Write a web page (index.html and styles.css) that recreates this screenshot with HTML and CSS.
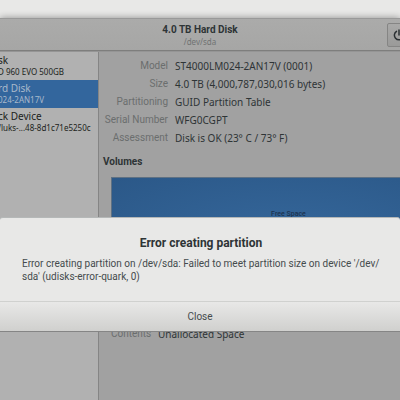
FILE: index.html
```html
<!DOCTYPE html>
<html lang="en">
<head>
<meta charset="utf-8">
<title>Disks</title>
<link rel="stylesheet" href="styles.css">
</head>
<body>
<div class="window">
  <header class="titlebar">
    <div class="titles">
      <h1>4.0 TB Hard Disk</h1>
      <p>/dev/sda</p>
    </div>
    <button class="power" type="button" aria-label="Power off">
      <svg width="12" height="12" viewBox="0 0 12 12" fill="none" stroke="#2b3033" stroke-width="1.5" stroke-linecap="round"><path d="M3.5 2.3A4.6 4.6 0 1 0 8.5 2.3M6 1v5"/></svg>
    </button>
  </header>
  <div class="panes">
    <nav class="sidebar">
      <a class="device" href="#"><span class="name">sk</span><span class="detail">D 960 EVO 500GB</span></a>
      <a class="device selected" href="#"><span class="name">rd Disk</span><span class="detail">024-2AN17V</span></a>
      <a class="device" href="#"><span class="name">ck Device</span><span class="detail">/luks-...48-8d1c71e5250c</span></a>
    </nav>
    <main class="content">
      <dl class="facts">
        <dt>Model</dt><dd>ST4000LM024-2AN17V (0001)</dd>
        <dt>Size</dt><dd>4.0 TB (4,000,787,030,016 bytes)</dd>
        <dt>Partitioning</dt><dd>GUID Partition Table</dd>
        <dt>Serial Number</dt><dd>WFG0CGPT</dd>
        <dt>Assessment</dt><dd>Disk is OK (23° C / 73° F)</dd>
      </dl>
      <h2>Volumes</h2>
      <div class="volume">Free Space</div>
      <dl class="facts volume-facts">
        <dt>Contents</dt><dd>Unallocated Space</dd>
      </dl>
    </main>
  </div>
</div>
<div class="dialog" role="alertdialog" aria-labelledby="dialog-title" aria-describedby="dialog-text">
  <div class="message">
    <h2 id="dialog-title">Error creating partition</h2>
    <p id="dialog-text">Error creating partition on /dev/sda: Failed to meet partition size on device '/dev/<wbr>sda' (udisks-error-quark, 0)</p>
  </div>
  <button class="close" type="button">Close</button>
</div>
</body>
</html>
```
FILE: styles.css
```css
* { box-sizing: border-box; }

body {
  margin: 0;
  min-height: 100vh;
  padding-top: 18px;
  display: flex;
  flex-direction: column;
  overflow: hidden;
  background: #e8e8e7;
  color: #2e3436;
  font: 10px/14px Roboto, sans-serif;
}

h1, h2, p, dl, dd { margin: 0; }

button { font: inherit; color: inherit; }

.window {
  flex: 1;
  display: flex;
  flex-direction: column;
  background: #a1a1a1;
  box-shadow: 0 0 7px rgba(0, 0, 0, 0.4);
}

.titlebar {
  height: 33px;
  display: flex;
  justify-content: center;
  position: relative;
  border-top: 1px solid #999;
  border-bottom: 1px solid #7e7e7d;
  background: linear-gradient(#ababaa, #a6a6a5);
}

.titles { padding-top: 4px; text-align: center; }

.titles h1 { font-size: 10px; line-height: 14px; }

.titles p {
  font-family: "Noto Sans", sans-serif;
  font-size: 8px;
  line-height: 10px;
  color: #707373;
}

.power {
  position: absolute;
  top: 4px;
  right: -11px;
  width: 24px;
  height: 24px;
  padding: 0 5px;
  display: flex;
  align-items: center;
  border: 1px solid #858584;
  border-radius: 2px;
  background: linear-gradient(#a9a9a8, #9a9a99);
}

.panes { flex: 1; display: flex; border-top: 1px solid #959595; }

.sidebar {
  flex: 0 0 99px;
  border-right: 1px solid #858585;
  background: #b1b1b1;
  font-family: "Noto Sans", sans-serif;
  overflow: hidden;
}

.device {
  display: block;
  height: 28px;
  padding-top: 1px;
  color: #1c1f20;
  text-decoration: none;
  white-space: nowrap;
}

.name, .detail { display: block; margin-left: -2px; }

.name { font-size: 10px; line-height: 14px; }

.detail { font-size: 8px; line-height: 10px; }

.selected { background: #33669d; color: #a9b9cb; }

.content { flex: 1; min-width: 0; padding: 4px 0 0 4px; }

.facts {
  display: grid;
  grid-template-columns: 65px 1fr;
  column-gap: 7px;
  line-height: 18px;
}

.content > .facts:first-child { row-gap: 0; padding-top: 1px; }

.facts dt { color: #6b6e6e; text-align: right; white-space: nowrap; }

.facts dd { font-family: "Noto Sans", sans-serif; }

.content h2 { margin-top: 8px; font-size: 10px; line-height: 14px; }

.volume {
  height: 136px;
  margin: 8px -66px 0 8px;
  padding-top: 30px;
  border: 1px solid #5f7183;
  background: radial-gradient(ellipse at center, #36689c, #2b5888);
  font-size: 7px;
  font-weight: 500;
  line-height: 12px;
  text-align: center;
  color: #1c3350;
}

.volume-facts { grid-template-columns: 40px 1fr; margin: 12px 0 0 8px; }

.dialog {
  position: absolute;
  top: 217px;
  left: 0;
  right: 0;
  border-top: 1px solid #b5b8b8;
  border-bottom: 1px solid #858585;
  border-radius: 3px 3px 0 0;
  background: #e8e8e7;
}

.message { padding: 17px 20px 18px 22px; }

.message h2 {
  margin-bottom: 6px;
  font-size: 12px;
  line-height: 16px;
  text-align: center;
}

.message p { line-height: 13px; color: #454b4d; }

.close {
  display: block;
  width: 100%;
  height: 30px;
  padding: 0;
  border: 0;
  border-top: 1px solid #d0d1cf;
  background: linear-gradient(#e8e8e7, #d0d0ce);
  color: #454b4d;
}
```
